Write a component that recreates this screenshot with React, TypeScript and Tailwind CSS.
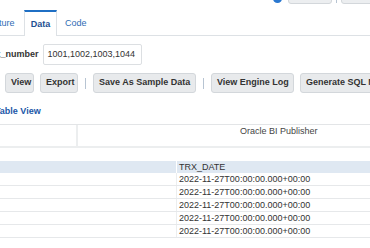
import React from 'react';

const rows = Array.from({ length: 5 }, () => '2022-11-27T00:00:00.000+00:00');

function ToolButton({ label, width, align = 'text-center' }: { label: string; width: string; align?: string }) {
  return (
    <button
      className={`h-[20px] ${width} ${align} shrink-0 overflow-hidden whitespace-nowrap rounded-[3px] border border-[#d3d7db] bg-[#e8eaec] px-[5px] text-[9px] font-bold text-[#333]`}
    >
      {label}
    </button>
  );
}

function Sep() {
  return <div className="mx-[1px] h-[11px] w-px shrink-0 bg-[#b7c4d2]" />;
}

export default function App() {
  return (
    <div className="relative h-[248px] w-[370px] overflow-hidden bg-white font-['Liberation_Sans',Arial,sans-serif] text-[9px] text-[#333]">
      {/* page toolbar, mostly scrolled out of view */}
      <div className="flex h-[10px] justify-end">
        <div className="-mr-[20px] -mt-[14px] flex h-[18px] items-end">
          <div className="mb-[1px] h-[9px] w-[9px] rounded-full bg-[#2a78d0]" />
          <div className="ml-[6px] h-[18px] w-[44px] rounded-[3px] border border-[#d3d7db] bg-[#eceef0]" />
          <div className="mx-[4px] mb-[1px] h-[6px] w-px bg-[#b7c4d2]" />
          <div className="h-[18px] w-[49px] rounded-[3px] border border-[#d3d7db] bg-[#eceef0]" />
        </div>
      </div>

      {/* tabs */}
      <div className="-ml-[30px] flex h-[26px] items-end border-b border-[#dde1e5]">
        <div className="flex h-[25px] w-[54px] items-center pl-[8px] pt-[2px] text-[#2f6cb5]">Structure</div>
        <div className="-mb-px flex h-[26px] w-[33px] items-center justify-center border-x border-t-2 border-x-[#dde1e5] border-t-[#1f6fc4] bg-white pt-[1px] font-bold text-[#1d4f91]">
          Data
        </div>
        <div className="flex h-[25px] items-center px-[8px] pt-[2px] text-[#2f6cb5]">Code</div>
      </div>

      {/* parameter */}
      <div className="-ml-[11px] mt-[8px] flex items-center gap-[4px]">
        <span className="font-bold text-[#333]">trx_number</span>
        <div className="flex h-[21px] w-[99px] items-center rounded-[2px] border border-[#dcdfe2] bg-white px-[4px]">
          1001,1002,1003,1044
        </div>
      </div>

      {/* actions */}
      <div className="ml-[5px] mt-[8px] flex items-center gap-[6px]">
        <ToolButton label="View" width="w-[29px]" />
        <ToolButton label="Export" width="w-[38px]" />
        <Sep />
        <ToolButton label="Save As Sample Data" width="w-[103px]" />
        <Sep />
        <ToolButton label="View Engine Log" width="w-[83px]" />
        <ToolButton label="Generate SQL Monitor" width="w-[110px]" align="text-left" />
      </div>

      <div className="-ml-[5px] mt-[12px] h-[12px] leading-[12px] font-bold text-[#1c58a8]">Table View</div>

      {/* report header */}
      <div className="mt-[7px] flex h-[24px] w-[480px] border-t border-b-2 border-t-[#e3e5e7] border-b-[#eceeef]">
        <div className="w-[78px] shrink-0 border-r-2 border-[#eceeef]" />
        <div className="pl-[162px] pt-[1px] leading-[11px] text-[#444]">Oracle BI Publisher</div>
      </div>

      {/* data table */}
      <div className="mt-[13px] w-[480px]">
        <div className="flex h-[12px] bg-[#dfe8f2] leading-[12px]">
          <div className="w-[177px] shrink-0 border-r border-white" />
          <div className="pl-[2px]">TRX_DATE</div>
        </div>
        {rows.map((d, i) => (
          <div key={i} className="flex h-[13px] border-b border-[#e6e8ea] leading-[12px]">
            <div className="w-[177px] shrink-0 border-r border-[#eceeef]" />
            <div className="pl-[2px]">{d}</div>
          </div>
        ))}
      </div>
    </div>
  );
}
